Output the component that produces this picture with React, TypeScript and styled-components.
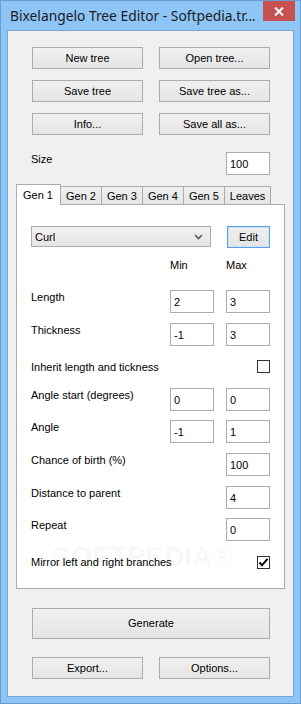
import React from "react";
import styled, { createGlobalStyle } from "styled-components";

const GlobalStyle = createGlobalStyle`
  html, body {
    margin: 0;
    padding: 0;
    background: #8ec5f7;
  }
  * {
    box-sizing: border-box;
  }
`;

type Row = {
  label: string;
  min?: string;
  max?: string;
  check?: boolean;
};

const rows: Row[] = [
  { label: "Length", min: "2", max: "3" },
  { label: "Thickness", min: "-1", max: "3" },
  { label: "Inherit length and tickness", check: false },
  { label: "Angle start (degrees)", min: "0", max: "0" },
  { label: "Angle", min: "-1", max: "1" },
  { label: "Chance of birth (%)", max: "100" },
  { label: "Distance to parent", max: "4" },
  { label: "Repeat", max: "0" },
  { label: "Mirror left and right branches", check: true },
];

const tabs = ["Gen 1", "Gen 2", "Gen 3", "Gen 4", "Gen 5", "Leaves"];

const App: React.FC = () => {
  return (
    <>
      <GlobalStyle />
      <Window>
        <TitleBar>
          <Title>Bixelangelo Tree Editor - Softpedia.tr...</Title>
          <CloseButton>
            <svg width="10" height="9" viewBox="0 0 10 9">
              <path d="M1 0.5 L9 8.5 M9 0.5 L1 8.5" stroke="#fff" strokeWidth="2" />
            </svg>
          </CloseButton>
        </TitleBar>
        <Client>
          <ButtonGrid>
            <Button>New tree</Button>
            <Button>Open tree...</Button>
            <Button>Save tree</Button>
            <Button>Save tree as...</Button>
            <Button>Info...</Button>
            <Button>Save all as...</Button>
          </ButtonGrid>

          <SizeRow>
            <Label>Size</Label>
            <TextBox>100</TextBox>
          </SizeRow>

          <TabStrip>
            {tabs.map((t, i) => (
              <Tab key={t} $active={i === 0}>
                {t}
              </Tab>
            ))}
          </TabStrip>
          <Panel>
            <TopRow>
              <Select>
                Curl
                <svg width="9" height="6" viewBox="0 0 9 6">
                  <path d="M1 1 L4.5 4.5 L8 1" stroke="#5a5a5a" strokeWidth="1.6" fill="none" />
                </svg>
              </Select>
              <EditButton>Edit</EditButton>
            </TopRow>
            <HeaderRow>
              <span />
              <Label>Min</Label>
              <Label>Max</Label>
            </HeaderRow>
            <Form>
              {rows.map((r) =>
                r.check !== undefined ? (
                  <FormRow key={r.label} $check>
                    <Label>{r.label}</Label>
                    <CheckBox>
                      {r.check && (
                        <svg width="11" height="11" viewBox="0 0 11 11">
                          <path d="M1.5 5.5 L4 8.3 L9.5 1.8" stroke="#000" strokeWidth="2" fill="none" />
                        </svg>
                      )}
                    </CheckBox>
                  </FormRow>
                ) : (
                  <FormRow key={r.label}>
                    <Label>{r.label}</Label>
                    {r.min !== undefined && <TextBox $col={2}>{r.min}</TextBox>}
                    {r.max !== undefined && <TextBox $col={3}>{r.max}</TextBox>}
                  </FormRow>
                )
              )}
            </Form>
            <Watermark>SOFTPEDIA®</Watermark>
          </Panel>

          <GenerateButton>Generate</GenerateButton>
          <BottomGrid>
            <Button>Export...</Button>
            <Button>Options...</Button>
          </BottomGrid>
        </Client>
      </Window>
    </>
  );
};

const Window = styled.div`
  width: 301px;
  height: 704px;
  background: #8ec5f7;
  border: 1px solid #6b9dd2;
  display: flex;
  flex-direction: column;
  font-family: "Liberation Sans", Arial, sans-serif;
  font-size: 11px;
  color: #000;
`;

const TitleBar = styled.div`
  height: 29px;
  display: flex;
  align-items: flex-start;
  padding-left: 9px;
  padding-right: 5px;
`;

const Title = styled.div`
  flex: 1;
  font-family: "Noto Sans", "Open Sans", sans-serif;
  font-size: 13.8px;
  line-height: 20px;
  padding-top: 5px;
  color: #1b1b1b;
  white-space: nowrap;
`;

const CloseButton = styled.div`
  width: 32px;
  height: 20px;
  background: #c75050;
  display: flex;
  align-items: center;
  justify-content: center;
`;

const Client = styled.div`
  flex: 1;
  margin: 0 6px 6px 6px;
  border: 1px solid #7aa6d3;
  background: #f0f0f0;
  padding: 16px 8px 0 8px;
  display: flex;
  flex-direction: column;
`;

const ButtonGrid = styled.div`
  display: grid;
  grid-template-columns: 111px 111px;
  column-gap: 16px;
  row-gap: 11px;
  padding-left: 16px;
`;

const Button = styled.div`
  height: 22px;
  border: 1px solid #acacac;
  background: linear-gradient(#f0f0f0, #e5e5e5);
  display: flex;
  align-items: center;
  justify-content: center;
`;

const GenerateButton = styled(Button)`
  height: 31px;
  margin: 19px 15px 0 16px;
`;

const BottomGrid = styled(ButtonGrid)`
  margin-top: 18px;
`;

const Label = styled.div`
  line-height: 14px;
  white-space: nowrap;
`;

const SizeRow = styled.div`
  display: flex;
  justify-content: space-between;
  margin-top: 17px;
  padding: 0 15px 0 15px;
`;

const TextBox = styled.div<{ $col?: number }>`
  width: 44px;
  height: 23px;
  border: 1px solid #abadb3;
  background: #fff;
  padding: 4px 0 0 3px;
  line-height: 14px;
  grid-column: ${(p) => p.$col ?? "auto"};
`;

const TabStrip = styled.div`
  display: flex;
  align-items: flex-end;
  height: 20px;
  margin-top: 9px;
  position: relative;
  z-index: 1;
`;

const Tab = styled.div<{ $active?: boolean }>`
  height: ${(p) => (p.$active ? "21px" : "18px")};
  margin-bottom: ${(p) => (p.$active ? "-1px" : "0")};
  margin-left: -1px;
  border: 1px solid #acacac;
  border-bottom: none;
  background: ${(p) => (p.$active ? "#fff" : "linear-gradient(#f0f0f0, #e5e5e5)")};
  padding: ${(p) => (p.$active ? "3px 7px 0 6px" : "2px 5px 0 5px")};
  line-height: 14px;
  position: relative;
  z-index: ${(p) => (p.$active ? 2 : 1)};
  &:first-child {
    margin-left: 0;
  }
`;

const Panel = styled.div`
  position: relative;
  border: 1px solid #acacac;
  background: #fff;
  padding: 21px 14px 14px 14px;
  overflow: hidden;
`;

const TopRow = styled.div`
  display: flex;
  justify-content: space-between;
  align-items: flex-start;
`;

const Select = styled.div`
  width: 180px;
  height: 21px;
  border: 1px solid #acacac;
  background: linear-gradient(#f0f0f0, #e5e5e5);
  display: flex;
  align-items: center;
  justify-content: space-between;
  padding: 0 7px 0 3px;
`;

const EditButton = styled(Button)`
  width: 43px;
  border-color: #5b9fe4;
  box-shadow: inset 0 0 0 1px #cde3f8;
`;

const HeaderRow = styled.div`
  display: grid;
  grid-template-columns: minmax(0, 1fr) 44px 44px;
  column-gap: 12px;
  margin-top: 10px;
`;

const Form = styled.div`
  display: flex;
  flex-direction: column;
  gap: 9.6px;
  margin-top: 18px;
`;

const FormRow = styled.div<{ $check?: boolean }>`
  display: grid;
  grid-template-columns: minmax(0, 1fr) 44px 44px;
  column-gap: 12px;
  height: 23px;
  align-items: ${(p) => (p.$check ? "center" : "start")};
  & > ${Label} {
    grid-column: 1;
  }
`;

const CheckBox = styled.div`
  grid-column: 3;
  justify-self: end;
  width: 13px;
  height: 13px;
  border: 1px solid #333;
  background: #fff;
  display: flex;
  align-items: center;
  justify-content: center;
`;

const Watermark = styled.div`
  position: absolute;
  left: 35px;
  top: 336px;
  font-family: "Liberation Sans", Arial, sans-serif;
  font-weight: bold;
  font-size: 28px;
  color: rgba(0, 0, 0, 0.035);
  pointer-events: none;
`;

export default App;
